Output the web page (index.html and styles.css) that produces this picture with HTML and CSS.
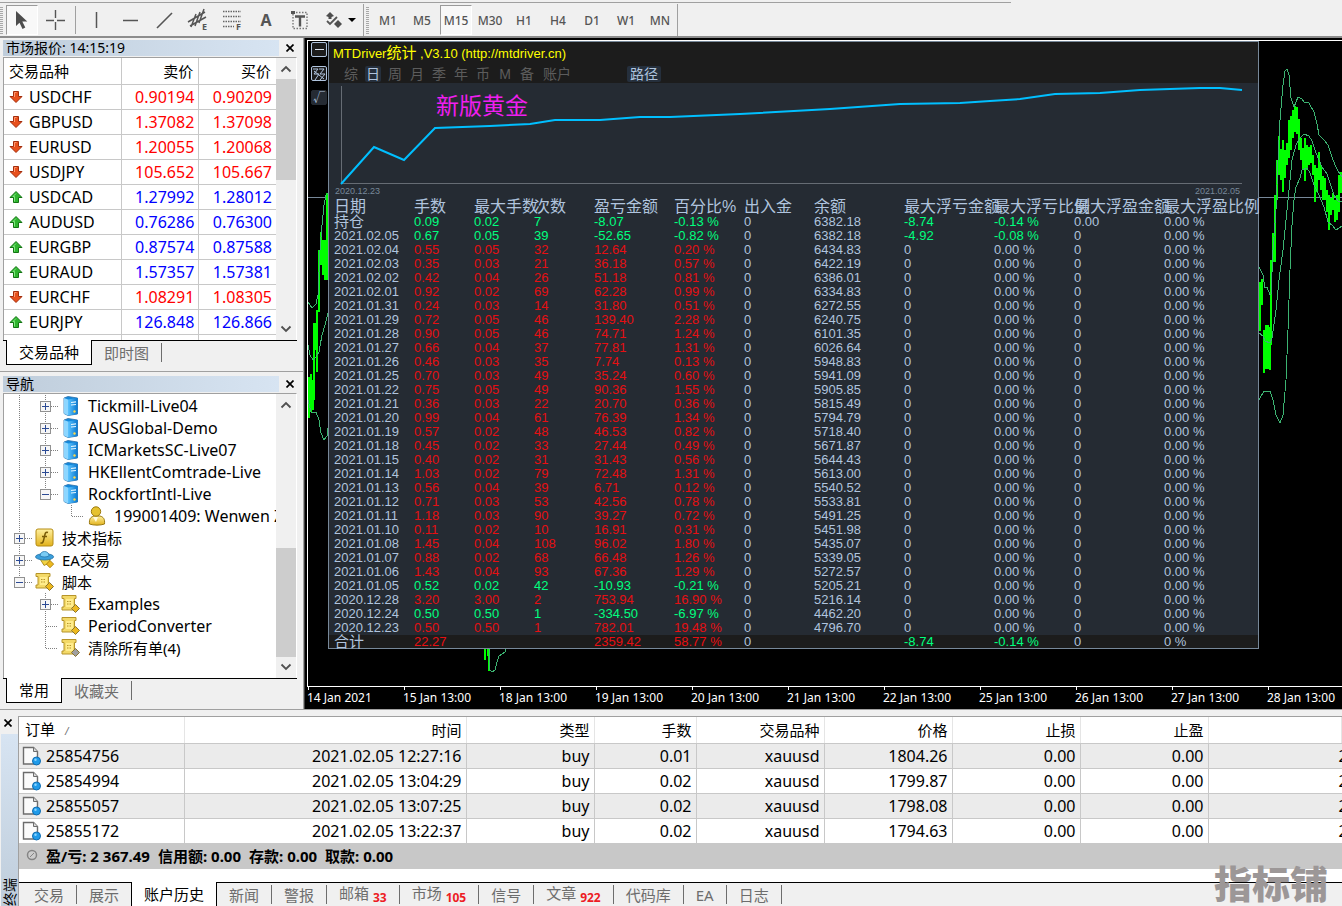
FILE: index.html
```html
<!DOCTYPE html>
<html lang="zh-CN">
<head>
  <meta charset="UTF-8">
  <meta name="viewport" content="width=device-width, initial-scale=1.0">
  <title>MTDriver统计</title>
  <link rel="stylesheet" href="styles.css">
</head>
<body>

  <svg class="defs" width="0" height="0" aria-hidden="true">
    <defs>
      <linearGradient id="blueGrad" x1="0" x2="1"><stop offset="0" stop-color="#5cc4ff"/><stop offset="1" stop-color="#0a78d0"/></linearGradient>
      <linearGradient id="goldGrad" x1="0" x2="0" y1="0" y2="1"><stop offset="0" stop-color="#fff0a0"/><stop offset="1" stop-color="#e2b21c"/></linearGradient>
    </defs>
    <symbol id="down" viewBox="0 0 14 14">
      <path d="M4.500 1.500h5v5h3.500l-6 6-6-6h3.500z" fill="#e8501c" stroke="#a32d0c"/>
      <path d="M5.500 7v-4.500h2" fill="none" stroke="#ff9a70"/>
    </symbol>
    <symbol id="up" viewBox="0 0 14 14">
      <path d="M7 1.500l6 6h-3.500v5h-5v-5h-3.500z" fill="#2fb52f" stroke="#137513"/>
      <path d="M7 3.500l-3 3h1.500v5" fill="none" stroke="#80e880"/>
    </symbol>
    <symbol id="plus" viewBox="0 0 26 22">
      <path d="M13.500 0v22M19 11.500h7" class="dots"/>
      <rect x="8.500" y="6.500" width="10" height="10" fill="#f6f6f6" stroke="#919191"/>
      <path d="M10 11.500h7M13.500 8v7" stroke="#2b4a94"/>
    </symbol>
    <symbol id="minus" viewBox="0 0 26 22">
      <path d="M13.500 0v6M19 11.500h7" class="dots"/>
      <rect x="8.500" y="6.500" width="10" height="10" fill="#f6f6f6" stroke="#919191"/>
      <path d="M10 11.500h7" stroke="#2b4a94"/>
    </symbol>
    <symbol id="line" viewBox="0 0 26 22"><path d="M13.500 0v22" class="dots"/></symbol>
    <symbol id="tee" viewBox="0 0 26 22"><path d="M13.500 0v22M14 11.500h12" class="dots"/></symbol>
    <symbol id="elbow" viewBox="0 0 26 22"><path d="M13.500 0v11.500h14" class="dots"/></symbol>
    <symbol id="server" viewBox="0 0 20 20">
      <path d="M3 2l4-1.500 9.500 1.500v16l-9.500 1.500-4-2z" fill="#1389dc" stroke="#2b6ea8" stroke-width=".8"/>
      <path d="M3 2l4 1.500v16l-4-2z" fill="#8dd6ff"/>
      <path d="M7 3.500l9.500-1.500v16l-9.500 1.500z" fill="url(#blueGrad)"/>
      <path d="M10 6.500l5-.6M10 9l5-.5" stroke="#e8f8ff" stroke-width="1.200"/>
      <circle cx="13.500" cy="15.500" r="1.200" fill="#ffd84a"/>
    </symbol>
    <symbol id="user" viewBox="0 0 20 20">
      <path d="M2.500 18c-.5-5 1-7 4.500-8h6c3.500 1 5 3 4.500 8-4 1.500-11 1.500-15 0z" fill="url(#goldGrad)" stroke="#9b7a10"/>
      <circle cx="9" cy="5.500" r="4.700" fill="#e6c22e" stroke="#9b7a10"/>
      <path d="M6 11l3 5 2-5z" fill="#fffbe0"/>
    </symbol>
    <symbol id="func" viewBox="0 0 20 20">
      <rect x="1" y="1" width="17" height="17" rx="2" fill="url(#goldGrad)" stroke="#b58c14"/>
      <path d="M13 4.500c-2.500-1-3 1-3.500 4l-1 4c-.4 2-1.200 3-3 2.300M7 8.500h5" fill="none" stroke="#7a5b07" stroke-width="1.500"/>
    </symbol>
    <symbol id="expert" viewBox="0 0 22 20">
      <path d="M5 8l5 8 6-3 1-6z" fill="#f2d243" stroke="#a88a18"/>
      <ellipse cx="10.500" cy="6.500" rx="10" ry="3.500" fill="#3a9fdc" stroke="#1d6da3" stroke-width=".8"/>
      <path d="M5.500 5.500c0-6.500 10-6.500 10 0-2.500 1.500-7.500 1.500-10 0z" fill="#79cbf4" stroke="#1d6da3" stroke-width=".8"/>
      <path d="M16.500 10.500l4 4-4 4-4-4z" fill="#edb91f" stroke="#a87e0d"/>
    </symbol>
    <symbol id="script" viewBox="0 0 20 20">
      <path d="M1 1.500h14v3h-1.500v8.500l1.500 3h-14v-3h2v-8.500h-2z" fill="#f3d968" stroke="#b6942a"/>
      <path d="M5 5h7v8h-7z" fill="#ffec8c"/>
      <path d="M6 7.500h5M6 10h5" stroke="#b6942a" stroke-dasharray="1.500 1"/>
      <path d="M14.500 10.500l4 4-4 4-4-4z" fill="var(--tag, #edb91f)" stroke="#8a7430"/>
    </symbol>
    <symbol id="doc" viewBox="0 0 20 20">
      <path d="M1.500 1.500h10l4 4v12.500h-14z" fill="#fbfbfb" stroke="#6d6d6d" stroke-width="1.400"/>
      <path d="M11.500 1.500v4h4" fill="#d8d8d8" stroke="#6d6d6d"/>
      <circle cx="14.500" cy="15" r="4" fill="#1f9bea" stroke="#0f6bb0"/>
      <circle cx="13.500" cy="13.700" r="1.200" fill="#8cd4ff"/>
    </symbol>
    <symbol id="chevUp" viewBox="0 0 12 8"><path d="M1.500 6.500l4.500-4.500 4.500 4.500" fill="none" stroke="#505050" stroke-width="1.800"/></symbol>
    <symbol id="chevDown" viewBox="0 0 12 8"><path d="M1.500 1.500l4.500 4.500 4.500-4.500" fill="none" stroke="#505050" stroke-width="1.800"/></symbol>
    <symbol id="close" viewBox="0 0 8 8"><path d="M.5 .5l7 7M7.500 .5l-7 7" stroke="#000" stroke-width="1.700"/></symbol>
  </svg>

  <header class="toolbars">
    <div class="toolbar">
      <span class="grip"></span>
      <button class="tool pressed" aria-label="光标">
        <svg width="22" height="22"><path d="M5 2v15l3.500-3.200 3 6.200 2.800-1.400-3-6h5z" fill="#4d4d4d"/></svg>
      </button>
      <button class="tool" aria-label="十字准线">
        <svg width="22" height="22"><path d="M10.500 1v8M10.500 13v8M1 11.500h8M12 11.500h8" stroke="#555" stroke-width="1.400"/></svg>
      </button>
      <span class="divider"></span>
      <button class="tool" aria-label="垂直线">
        <svg width="22" height="22"><path d="M11.500 3v16" stroke="#555" stroke-width="1.500"/></svg>
      </button>
      <button class="tool" aria-label="水平线">
        <svg width="22" height="22"><path d="M4 11.500h15" stroke="#555" stroke-width="1.500"/></svg>
      </button>
      <button class="tool" aria-label="趋势线">
        <svg width="22" height="22"><path d="M4 19l15-15" stroke="#555" stroke-width="1.600"/></svg>
      </button>
      <button class="tool" aria-label="等距通道">
        <svg width="24" height="24"><path d="M2 14l17-10M4 18l16-9M5 19l5-13M9 18l5-14M13 15l5-14" stroke="#555" stroke-width="1.500"/><text x="16" y="22" class="tiny">E</text></svg>
      </button>
      <button class="tool" aria-label="斐波纳契">
        <svg width="24" height="24"><path d="M3 3.500h18M3 8.500h18M3 13.500h18M3 18.500h11" stroke="#666" stroke-width="1.500" stroke-dasharray="1.500 1"/><text x="16" y="22" class="tiny">F</text></svg>
      </button>
      <button class="tool letter" aria-label="文字">A</button>
      <button class="tool" aria-label="文字标签">
        <svg width="22" height="22"><rect x="4" y="3.500" width="14" height="16" fill="none" stroke="#777" stroke-width="1.400" stroke-dasharray="1.500 1.500"/><path d="M6 7.500h10M11 7.500v10" stroke="#555" stroke-width="2.400"/><path d="M2 2h4v3h-4z" fill="#555"/></svg>
      </button>
      <button class="tool shapes" aria-label="箭头">
        <svg width="18" height="18"><path d="M5 1l4 4-2.500 1v2h-3v-2l-2.500-1z" fill="#4d4d4d"/><path d="M2 10l3 3 7-7" stroke="#555" stroke-width="1.800" fill="none"/><path d="M13 9l4 4-4 4-4-4z" fill="#4d4d4d"/></svg>
        <svg width="8" height="5"><path d="M0 0h8l-4 4z" fill="#000"/></svg>
      </button>
    </div>
    <div class="toolbar periods">
      <span class="grip"></span>
      <button class="tool">M1</button>
      <button class="tool">M5</button>
      <button class="tool pressed">M15</button>
      <button class="tool">M30</button>
      <button class="tool">H1</button>
      <button class="tool">H4</button>
      <button class="tool">D1</button>
      <button class="tool">W1</button>
      <button class="tool">MN</button>
    </div>
  </header>

  <div class="workspace">
    <aside class="dock">
      <section class="market">
        <div class="dock-head">
          <h2 class="dock-title">市场报价: 14:15:19</h2>
          <button class="close" aria-label="关闭"><svg width="8" height="8"><use href="#close"/></svg></button>
        </div>
        <div class="dock-body">
          <table class="quotes">
            <thead><tr><th>交易品种</th><th>卖价</th><th>买价</th></tr></thead>
            <tbody id="quotes"></tbody>
          </table>
          <div class="scrollbar">
            <svg width="12" height="8"><use href="#chevUp"/></svg>
            <div class="track"><div class="thumb"></div></div>
            <svg width="12" height="8"><use href="#chevDown"/></svg>
          </div>
        </div>
        <nav class="tabs">
          <button class="tab active">交易品种</button>
          <button class="tab">即时图</button>
        </nav>
      </section>

      <section class="navigator">
        <div class="dock-head">
          <h2 class="dock-title">导航</h2>
          <button class="close" aria-label="关闭"><svg width="8" height="8"><use href="#close"/></svg></button>
        </div>
        <div class="dock-body">
          <ul class="tree" id="tree"></ul>
          <div class="scrollbar low">
            <svg width="12" height="8"><use href="#chevUp"/></svg>
            <div class="track"><div class="thumb"></div></div>
            <svg width="12" height="8"><use href="#chevDown"/></svg>
          </div>
        </div>
        <nav class="tabs">
          <button class="tab active">常用</button>
          <button class="tab">收藏夹</button>
        </nav>
      </section>
    </aside>

    <main class="chart">
      <div class="plot">
        <div class="chart-left">
          <svg class="price" viewBox="308 41 20 608" width="20" height="608">
            <path d="M308 197.500h20" class="level"/>
            <path d="M309 377v41M311 374v38M313 380v30M314 323v77M316 323v27M317 310v62M319 250v62M321 232v33M323 240v35M325 240v40M327 193v87" class="candle"/>
            <path d="M308 302l4 6 4-4 2-9 2-45 2-25 2-20 2-10 2-2M308 345l2 10 3 5 3-3 3-5 3-17 3-10 3-12M308 400l3 12h5l3 8 2 13 3 7 3-4 1-8" class="band"/>
          </svg>
          <div class="side-buttons">
            <button class="side-button" aria-label="最小化"><svg width="14" height="14"><path d="M3 6.500h9" stroke="#dfe6f0"/></svg></button>
            <button class="side-button" aria-label="移动"><svg width="14" height="14"><path d="M1 2h5l-4 5h5l-4 6M7 2h5l-4 5h5l-5 6M2 4l10 8" fill="none" stroke="#b0c4de"/></svg></button>
            <button class="side-button plain">√</button>
          </div>
        </div>

        <section class="stats">
          <div class="stats-head">
            <h1 class="stats-title">MTDriver<span>统计</span> ,V3.10 (http://mtdriver.cn)</h1>
            <div class="modes">
              <button class="mode">综</button>
              <button class="mode on">日</button>
              <button class="mode">周</button>
              <button class="mode">月</button>
              <button class="mode">季</button>
              <button class="mode">年</button>
              <button class="mode">币</button>
              <button class="mode">M</button>
              <button class="mode">备</button>
              <button class="mode wide">账户</button>
              <button class="mode path on">路径</button>
            </div>
          </div>
          <div class="equity">
            <svg class="equity-line" viewBox="329 83 929 102" preserveAspectRatio="none" height="102">
              <path d="M341.500 86v98M341 183.500h901" fill="none" stroke="#666c74"/>
              <path d="M341 184l33-37 30 13 31-32 55-2 40-2 25-4 45 0 40-3h30l70-3 90-5 70-5 60-1 30-2 30-2 35-5 45-1 40-3 60-2 20 0 22 2" fill="none" stroke="#00bfff" stroke-width="2"/>
            </svg>
            <span class="equity-name">新版黄金</span>
            <div class="equity-range"><span>2020.12.23</span><span>2021.02.05</span></div>
          </div>
          <table class="days">
            <colgroup>
              <col class="w80"><col class="w60"><col class="w60"><col class="w60"><col class="w80"><col class="w70">
              <col class="w70"><col class="w90"><col class="w90"><col class="w80"><col class="w90"><col>
            </colgroup>
            <thead>
              <tr><th>日期</th><th>手数</th><th>最大手数</th><th>次数</th><th>盈亏金额</th><th>百分比%</th><th>出入金</th><th>余额</th><th>最大浮亏金额</th><th>最大浮亏比例</th><th>最大浮盈金额</th><th>最大浮盈比例</th></tr>
            </thead>
            <tbody id="days"></tbody>
            <tfoot>
              <tr><td class="cjk">合计</td><td class="gain">22.27</td><td></td><td></td><td class="gain">2359.42</td><td class="gain">58.77 %</td><td>0</td><td></td><td class="loss">-8.74</td><td class="loss">-0.14 %</td><td>0</td><td>0 %</td></tr>
            </tfoot>
          </table>
        </section>

        <svg class="price" viewBox="1259 41 83 608" width="83" height="608">
          <path d="M1259 197.500h83" class="level"/>
          <path d="M1260 282v49M1262 279v26M1264 330v43M1266 325v44M1268 325v44M1270 327v43M1271 260v85M1273 233v29M1275 195v67M1277 160v40M1279 136v39M1281 149v31M1283 140v52M1285 150v28M1287 143v22M1289 120v38M1291 116v34M1293 110v28M1295 106v26M1297 107v27M1299 119v31M1301 138v22M1303 148v22M1305 138v43M1307 145v25M1309 147v18M1311 145v18M1313 155v20M1315 165v37M1317 168v24M1319 152v28M1321 165v25M1323 176v24M1325 178v22M1327 190v22M1329 195v35M1331 198v17M1333 193v17M1335 200v22M1337 195v25M1339 175v37M1341 172v21" class="candle"/>
          <path d="M1259 267L1263 275 1265 288 1267 287 1270 295 1271 294 1273 250 1276 210 1278 160 1280 120 1283 85 1285 71 1287 69 1289 75 1291 98 1294 107 1296 102 1298 97 1302 99 1304 102 1309 103 1314 112 1317 124 1319 135 1324 140 1328 145 1332 157 1335 165 1338 171 1342 177" class="band"/>
          <path d="M1259 333L1263 336 1265 341 1270 343 1272 338 1276 310 1279 280 1283 250 1287 210 1290 180 1292 160 1296 145 1300 138 1304 134 1309 136 1312 141 1316 153 1322 167 1327 174 1330 183 1334 195 1338 201 1342 202" class="band"/>
          <path d="M1259 400L1264 391 1270 391 1273 400 1276 415 1280 423 1283 415 1286 380 1288 330 1290 270 1292 225 1294 200 1296 187 1300 178 1302 170 1307 168 1310 173 1314 185 1319 195 1324 207 1328 222 1332 225 1336 230 1342 226" class="band"/>
        </svg>
      </div>
      <div class="plot-rest">
        <svg class="tail" width="24" height="24">
          <path d="M2 0v11M5 0v7M6 0v22" class="candle"/>
          <path d="M6 0v20l3 3 3-2 2-8 2-6 3-2 3-2v-3" class="band"/>
        </svg>
      </div>
      <div class="time-axis">
        <span>14 Jan 2021</span><span>15 Jan 13:00</span><span>18 Jan 13:00</span><span>19 Jan 13:00</span><span>20 Jan 13:00</span><span>21 Jan 13:00</span><span>22 Jan 13:00</span><span>25 Jan 13:00</span><span>26 Jan 13:00</span><span>27 Jan 13:00</span><span>28 Jan 13:00</span>
      </div>
    </main>
  </div>

  <section class="terminal">
    <div class="terminal-side">
      <button class="close" aria-label="关闭"><svg width="8" height="8"><use href="#close"/></svg></button>
      <div class="terminal-name"><span>终端</span></div>
    </div>
    <div class="terminal-body">
      <table class="orders">
        <colgroup><col class="c-order"><col class="c-time"><col class="c-std"><col class="c-lots"><col class="c-std"><col class="c-std"><col class="c-std"><col class="c-std"><col></colgroup>
        <thead>
          <tr><th class="first">订单 <i>/</i></th><th>时间</th><th>类型</th><th>手数</th><th>交易品种</th><th>价格</th><th>止损</th><th>止盈</th><th></th></tr>
        </thead>
        <tbody id="orders"></tbody>
      </table>
      <div class="summary">
        <svg width="12" height="12"><circle cx="6" cy="6" r="4.500" fill="#ccc" stroke="#858585" stroke-width="1.500"/><path d="M4 8l4-4" stroke="#858585"/></svg>
        <span>盈/亏: 2 367.49</span><span>信用额: 0.00</span><span>存款: 0.00</span><span>取款: 0.00</span>
      </div>
      <nav class="tabs wide-tabs">
        <button class="tab">交易</button>
        <button class="tab">展示</button>
        <button class="tab active">账户历史</button>
        <button class="tab">新闻</button>
        <button class="tab">警报</button>
        <button class="tab">邮箱 <b>33</b></button>
        <button class="tab">市场 <b>105</b></button>
        <button class="tab">信号</button>
        <button class="tab">文章 <b>922</b></button>
        <button class="tab">代码库</button>
        <button class="tab">EA</button>
        <button class="tab">日志</button>
      </nav>
    </div>
    <div class="watermark">指标铺</div>
  </section>

  <script src="script.js"></script>
</body>
</html>
```

FILE: styles.css
```css
* {
  box-sizing: border-box;
}

body {
  margin: 0;
  height: 100vh;
  display: flex;
  flex-direction: column;
  overflow: hidden;
  background: #f0f0f0;
  color: #000;
  font-family: "Noto Sans", "Noto Sans CJK SC", sans-serif;
  font-size: 15px;
}

button {
  padding: 0;
  border: none;
  background: none;
  color: inherit;
  font: inherit;
  white-space: nowrap;
}

h1, h2 {
  margin: 0;
  font-weight: 400;
}

table {
  border-collapse: collapse;
  table-layout: fixed;
}

th {
  font-weight: 400;
  white-space: nowrap;
}

td {
  white-space: nowrap;
}

svg {
  display: block;
  flex: none;
}

.defs {
  position: absolute;
}

.dots {
  fill: none;
  stroke: #808080;
  stroke-dasharray: 1 1;
}

/* toolbars */

.toolbars {
  flex: none;
  display: flex;
  height: 38px;
  padding-top: 4px;
  border-bottom: 2px solid #8c8c8c;
  background: linear-gradient(#a0a0a0, #a0a0a0) 0 2px / 1011px 1px no-repeat, #f0f0f0;
}

.toolbar {
  display: flex;
  align-items: center;
  border-right: 1px solid #a0a0a0;
}

.grip {
  width: 3px;
  height: 27px;
  margin-right: 2px;
  background: repeating-linear-gradient(#a8a8a8 0 1px, #f0f0f0 1px 2px);
}

.tool {
  display: flex;
  align-items: center;
  justify-content: center;
  width: 34px;
  height: 30px;
  color: #555;
  font-size: 12px;
  font-weight: 500;
}

.tool svg {
  overflow: visible;
}

.tool.pressed {
  width: 32px;
  margin: 0 1px;
  border: 1px solid #fff;
  border-top-color: #9a9a9a;
  border-left-color: #9a9a9a;
  background: #f8f8f8;
}

.letter {
  font-size: 16px;
  font-weight: 700;
}

.shapes {
  width: 46px;
  gap: 5px;
}

.tiny {
  fill: #555;
  font-size: 9px;
  font-weight: 700;
}

.divider {
  width: 1px;
  height: 28px;
  margin: 0 3px 0 2px;
  background: #a0a0a0;
}

.periods {
  padding-left: 2px;
}

/* docked panels */

.workspace {
  flex: 1;
  display: flex;
  min-height: 0;
}

.dock {
  flex: none;
  width: 304px;
  display: flex;
  flex-direction: column;
  border-right: 1px solid #a0a0a0;
}

.market,
.navigator {
  display: flex;
  flex-direction: column;
  padding: 2px 6px 4px 3px;
}

.market {
  height: 334px;
  border-bottom: 1px solid #a0a0a0;
}

.navigator {
  flex: 1;
  min-height: 0;
  padding-top: 4px;
}

.dock-head {
  flex: none;
  display: flex;
  justify-content: space-between;
  height: 16px;
  margin-bottom: 1px;
}

.dock-title {
  flex: 1;
  padding-left: 3px;
  background: linear-gradient(90deg, #bfcddb, #d7e4f2);
  font-size: 14px;
  line-height: 16px;
}

.close {
  display: flex;
  align-items: center;
  justify-content: center;
  width: 18px;
  height: 16px;
}

.dock-head .close {
  padding-left: 4px;
}

.dock-body {
  flex: 1;
  display: flex;
  min-height: 0;
  overflow: hidden;
  border: 1px solid #a0a0a0;
  border-right-color: #fff;
  border-bottom: none;
  background: #fff;
}

.quotes {
  flex: 1;
  align-self: flex-start;
  font-size: 16px;
}

.quotes th,
.quotes td {
  height: 25px;
  padding: 0 4px;
  border-right: 1px solid #c8c8c8;
  border-bottom: 1px solid #c8c8c8;
  line-height: 22px;
  text-align: right;
}

.quotes th {
  height: 26px;
  padding-right: 5px;
  font-size: 15px;
}

.quotes th:first-child,
.quotes td:first-child {
  width: 117px;
  padding-left: 5px;
  text-align: left;
}

.quotes td:last-child,
.quotes th:last-child {
  border-right: none;
}

.quotes .symbol {
  display: flex;
  align-items: center;
  gap: 6px;
}

.fall {
  color: #f00;
}

.rise {
  color: #00f;
}

.scrollbar {
  flex: none;
  width: 20px;
  display: flex;
  flex-direction: column;
  align-items: center;
  gap: 6px;
  padding: 7px 0;
  background: #f0f0f0;
}

.track {
  flex: 1;
  display: flex;
  flex-direction: column;
  align-self: stretch;
}

.thumb {
  height: 42%;
  background: #cdcdcd;
}

.low .track {
  justify-content: flex-end;
}

.low .thumb {
  height: 45%;
}

.tabs {
  flex: none;
  display: flex;
  align-items: flex-start;
  height: 27px;
  padding-left: 3px;
  border-top: 1px solid #000;
}

.tab {
  height: 19px;
  margin-top: 2px;
  padding: 0 12px;
  border-right: 1px solid #6d6d6d;
  color: #6d6d6d;
  line-height: 16px;
}

.tab.active {
  height: 25px;
  margin-top: -1px;
  border: 1px solid #000;
  border-top: none;
  background: #fff;
  color: #000;
}

.tree {
  flex: 1;
  min-width: 0;
  margin: 0;
  padding: 1px 0 0 2px;
  overflow: hidden;
  list-style: none;
  font-size: 16px;
}

.tree li {
  display: flex;
  align-items: center;
  height: 22px;
  line-height: 22px;
  white-space: nowrap;
}

.tree .icon {
  margin: 0 7px 0 3px;
}

.tree .cjk {
  font-size: 15px;
}

.tree .manual {
  --tag: #a0a0a0;
}

/* chart window */

.chart {
  flex: 1;
  display: flex;
  flex-direction: column;
  min-width: 0;
  padding: 2px 0 3px 2px;
  border-left: 1px solid #404040;
  background: #000;
}

.plot {
  display: flex;
  border-top: 1px solid #fff;
  border-left: 1px solid #fff;
}

.plot-rest {
  flex: 1;
  border-left: 1px solid #fff;
}

.chart-left {
  position: relative;
  flex: none;
  width: 20px;
}

.side-buttons {
  position: absolute;
  top: 1px;
  left: 3px;
  display: flex;
  flex-direction: column;
  gap: 9px;
}

.side-button {
  display: flex;
  width: 16px;
  height: 15px;
  border: 1px solid #b0c4de;
  border-radius: 2px;
  background: #1c1c1c;
}

.side-button.plain {
  border-color: #252b33;
  background: #252b33;
  color: #b0c4de;
  font-size: 12px;
  line-height: 13px;
  justify-content: center;
}

.price,
.tail {
  overflow: visible;
  shape-rendering: crispEdges;
}

.level {
  stroke: #778899;
}

.candle {
  fill: none;
  stroke: #0f0;
  stroke-width: 2;
}

.band {
  fill: none;
  stroke: #3cb371;
}

.stats {
  flex: 1;
  min-width: 0;
  border: 1px solid #778899;
  background: #252b33;
  color: #b0c4de;
  font-family: "Liberation Sans", "Noto Sans CJK SC", sans-serif;
  z-index: 1;
}

.stats-head {
  height: 41px;
  padding: 2px 4px 0;
  background: #1c1c1c;
}

.stats-title {
  color: #ff0;
  font-size: 13px;
  line-height: 18px;
}

.stats-title span {
  font-size: 15px;
}

.modes {
  display: flex;
  gap: 6px;
  padding: 3px 0 0 10px;
}

.mode {
  width: 16px;
  height: 16px;
  border-radius: 2px;
  color: #5c5c5c;
  font-size: 14px;
  line-height: 16px;
}

.mode.on {
  background: #252f3c;
  color: #b0c4de;
}

.mode.wide {
  width: 32px;
}

.mode.path {
  width: 34px;
  margin-left: 48px;
}

.equity {
  position: relative;
  height: 116px;
}

.equity-line {
  width: 100%;
}

.equity-name {
  position: absolute;
  top: 8px;
  left: 107px;
  color: #f01ef0;
  font-size: 23px;
  line-height: 30px;
}

.equity-range {
  display: flex;
  justify-content: space-between;
  padding: 0 18px 0 6px;
  color: #778899;
  font-size: 9px;
  line-height: 12px;
}

.days {
  width: 100%;
  font-size: 13px;
  line-height: 14px;
}

.days th,
.days td {
  height: 14px;
  padding: 0;
  text-align: left;
}

.days th:first-child,
.days td:first-child {
  padding-left: 5px;
}

.days th {
  height: 16px;
  font-size: 16px;
  line-height: 16px;
}

.days .cjk {
  font-size: 15px;
}

.days tfoot {
  background: #1c1c1c;
}

.days tfoot td {
  height: 13px;
  line-height: 13px;
}

.w60 { width: 60px; }
.w70 { width: 70px; }
.w80 { width: 80px; }
.w90 { width: 90px; }

.days col:first-child {
  width: 85px;
}

.gain {
  color: #e60f12;
}

.loss {
  color: #00ff7f;
}

.tail {
  margin-left: 175px;
}

.time-axis {
  display: flex;
  overflow: hidden;
  border-top: 1px solid #fff;
  color: #fff;
  font-size: 12px;
  line-height: 16px;
}

.time-axis span {
  flex: 0 0 96px;
  padding-top: 3px;
  background: linear-gradient(#fff, #fff) 1px 0 / 1px 3px no-repeat;
  white-space: nowrap;
}

/* terminal */

.terminal {
  position: relative;
  flex: none;
  display: flex;
  height: 197px;
  padding-top: 6px;
  border-top: 1px solid #a0a0a0;
}

.terminal-side {
  flex: none;
  width: 18px;
  display: flex;
  flex-direction: column;
  padding-left: 1px;
}

.terminal-side .close {
  width: 14px;
  height: 14px;
}

.terminal-name {
  flex: 1;
  display: flex;
  align-items: flex-end;
  margin-top: 4px;
  background: linear-gradient(#d7e4f2, #bfcddb);
}

.terminal-name span {
  height: 28px;
  font-size: 14px;
  line-height: 17px;
  writing-mode: vertical-rl;
  text-orientation: sideways;
  transform: rotate(180deg);
}

.terminal-body {
  flex: 1;
  display: flex;
  flex-direction: column;
  min-width: 0;
  overflow: hidden;
  border-top: 1px solid #a0a0a0;
  border-left: 1px solid #a0a0a0;
  background: #fff;
}

.orders {
  width: 100%;
  font-size: 16px;
}

.c-order { width: 165px; }
.c-time { width: 282px; }
.c-std { width: 128px; }
.c-lots { width: 102px; }

.orders th,
.orders td {
  height: 25px;
  padding: 0 4px;
  overflow: hidden;
  border-right: 1px solid #c8c8c8;
  border-bottom: 1px solid #c8c8c8;
  line-height: 22px;
  text-align: right;
}

.orders th {
  height: 26px;
  border-right-color: #e5e5e5;
  font-size: 15px;
}

.orders .first {
  padding-left: 6px;
  text-align: left;
}

.first i {
  margin-left: 6px;
  color: #6d6d6d;
  font-size: 10px;
}

.orders td:last-child {
  padding: 0 0 0 130px;
  border-right: none;
  text-align: left;
}

.orders tbody tr:nth-child(odd) {
  background: #ebebeb;
}

.orders .number {
  display: flex;
  align-items: center;
  gap: 4px;
}

.orders .number svg {
  margin-left: -1px;
}

.summary {
  flex: none;
  display: flex;
  align-items: center;
  gap: 8px;
  height: 25px;
  padding: 0 0 2px 7px;
  background: #c8c8c8;
  font-weight: 700;
}

.wide-tabs {
  height: 24px;
  margin-top: auto;
  background: #f0f0f0;
}

.wide-tabs .tab:nth-child(2) {
  border-right: none;
}

.tab b {
  color: #ed1c24;
  font-size: 12px;
  vertical-align: -3px;
}

.watermark {
  position: absolute;
  right: 14px;
  bottom: 4px;
  color: #9c9797;
  font-family: "Noto Sans CJK SC", sans-serif;
  font-size: 38px;
  font-weight: 900;
  line-height: 40px;
}
```

FILE: script.js
```javascript
const quotes = [
  ['USDCHF', '0.90194', '0.90209', 'down'],
  ['GBPUSD', '1.37082', '1.37098', 'down'],
  ['EURUSD', '1.20055', '1.20068', 'down'],
  ['USDJPY', '105.652', '105.667', 'down'],
  ['USDCAD', '1.27992', '1.28012', 'up'],
  ['AUDUSD', '0.76286', '0.76300', 'up'],
  ['EURGBP', '0.87574', '0.87588', 'up'],
  ['EURAUD', '1.57357', '1.57381', 'up'],
  ['EURCHF', '1.08291', '1.08305', 'down'],
  ['EURJPY', '126.848', '126.866', 'up']
];

// guides, icon, label
const tree = [
  ['line plus', 'server', 'Tickmill-Live04'],
  ['line plus', 'server', 'AUSGlobal-Demo'],
  ['line plus', 'server', 'ICMarketsSC-Live07'],
  ['line plus', 'server', 'HKEllentComtrade-Live'],
  ['line minus', 'server', 'RockfortIntl-Live'],
  ['line none elbow', 'user', '199001409: Wenwen Z'],
  ['plus', 'func', '技术指标'],
  ['plus', 'expert', 'EA交易'],
  ['minus', 'script', '脚本'],
  ['none plus', 'script', 'Examples'],
  ['none tee', 'script', 'PeriodConverter'],
  ['none elbow', 'script', '清除所有单(4)']
];

// date, lots, max lots, count, profit, percent, balance
const days = [
  ['2021.02.04', '0.55', '0.05', '32', '12.64', '0.20', '6434.83'],
  ['2021.02.03', '0.35', '0.03', '21', '36.18', '0.57', '6422.19'],
  ['2021.02.02', '0.42', '0.04', '26', '51.18', '0.81', '6386.01'],
  ['2021.02.01', '0.92', '0.02', '69', '62.28', '0.99', '6334.83'],
  ['2021.01.31', '0.24', '0.03', '14', '31.80', '0.51', '6272.55'],
  ['2021.01.29', '0.72', '0.05', '46', '139.40', '2.28', '6240.75'],
  ['2021.01.28', '0.90', '0.05', '46', '74.71', '1.24', '6101.35'],
  ['2021.01.27', '0.66', '0.04', '37', '77.81', '1.31', '6026.64'],
  ['2021.01.26', '0.46', '0.03', '35', '7.74', '0.13', '5948.83'],
  ['2021.01.25', '0.70', '0.03', '49', '35.24', '0.60', '5941.09'],
  ['2021.01.22', '0.75', '0.05', '49', '90.36', '1.55', '5905.85'],
  ['2021.01.21', '0.36', '0.03', '22', '20.70', '0.36', '5815.49'],
  ['2021.01.20', '0.99', '0.04', '61', '76.39', '1.34', '5794.79'],
  ['2021.01.19', '0.57', '0.02', '48', '46.53', '0.82', '5718.40'],
  ['2021.01.18', '0.45', '0.02', '33', '27.44', '0.49', '5671.87'],
  ['2021.01.15', '0.40', '0.02', '31', '31.43', '0.56', '5644.43'],
  ['2021.01.14', '1.03', '0.02', '79', '72.48', '1.31', '5613.00'],
  ['2021.01.13', '0.56', '0.04', '39', '6.71', '0.12', '5540.52'],
  ['2021.01.12', '0.71', '0.03', '53', '42.56', '0.78', '5533.81'],
  ['2021.01.11', '1.18', '0.03', '90', '39.27', '0.72', '5491.25'],
  ['2021.01.10', '0.11', '0.02', '10', '16.91', '0.31', '5451.98'],
  ['2021.01.08', '1.45', '0.04', '108', '96.02', '1.80', '5435.07'],
  ['2021.01.07', '0.88', '0.02', '68', '66.48', '1.26', '5339.05'],
  ['2021.01.06', '1.43', '0.04', '93', '67.36', '1.29', '5272.57'],
  ['2021.01.05', '0.52', '0.02', '42', '-10.93', '-0.21', '5205.21'],
  ['2020.12.28', '3.20', '3.00', '2', '753.94', '16.90', '5216.14'],
  ['2020.12.24', '0.50', '0.50', '1', '-334.50', '-6.97', '4462.20'],
  ['2020.12.23', '0.50', '0.50', '1', '782.01', '19.48', '4796.70']
].map(row => [...row, '0', '0.00 %', '0', '0.00 %']);

days.unshift(
  ['持仓', '0.09', '0.02', '7', '-8.07', '-0.13', '6382.18', '-8.74', '-0.14 %', '0.00', '0.00 %'],
  ['2021.02.05', '0.67', '0.05', '39', '-52.65', '-0.82', '6382.18', '-4.92', '-0.08 %', '0', '0.00 %']
);

const orders = [
  ['25854756', '2021.02.05 12:27:16', '0.01', '1804.26'],
  ['25854994', '2021.02.05 13:04:29', '0.02', '1799.87'],
  ['25855057', '2021.02.05 13:07:25', '0.02', '1798.08'],
  ['25855172', '2021.02.05 13:22:37', '0.02', '1794.63']
];

function icon(id, width, height, cls = '') {
  return `<svg class="${cls}" width="${width}" height="${height}"><use href="#${id}"/></svg>`;
}

document.getElementById('quotes').innerHTML = quotes.map(([symbol, bid, ask, dir]) => {
  const color = dir === 'down' ? 'fall' : 'rise';
  return `<tr><td><span class="symbol">${icon(dir, 14, 14)}${symbol}</span></td>
    <td class="${color}">${bid}</td><td class="${color}">${ask}</td></tr>`;
}).join('') + '<tr><td></td><td></td><td></td></tr>';

document.getElementById('tree').innerHTML = tree.map(([guides, name, label], i) => {
  const cls = /[^\x00-\x7f]/.test(label) ? 'cjk' : '';
  const last = i === tree.length - 1 ? ' manual' : '';
  return `<li>${guides.split(' ').map(g => icon(g, 26, 22)).join('')}
    ${icon(name, 20, 20, 'icon' + last)}<span class="${cls}">${label}</span></li>`;
}).join('');

document.getElementById('days').innerHTML = days.map(row => {
  const [date, lots, maxLots, count, profit, percent, balance, ...floating] = row;
  const color = profit.startsWith('-') ? 'loss' : 'gain';
  const result = [lots, maxLots, count, profit, percent + ' %'];
  return `<tr><td class="${date === '持仓' ? 'cjk' : ''}">${date}</td>
    ${result.map(v => `<td class="${color}">${v}</td>`).join('')}
    <td>0</td><td>${balance}</td>
    ${floating.map(v => `<td class="${v.startsWith('-') ? 'loss' : ''}">${v}</td>`).join('')}</tr>`;
}).join('');

document.getElementById('orders').innerHTML = orders.map(([id, time, lots, price]) =>
  `<tr><td><span class="number">${icon('doc', 20, 20)}${id}</span></td><td>${time}</td><td>buy</td>
    <td>${lots}</td><td>xauusd</td><td>${price}</td><td>0.00</td><td>0.00</td><td>2</td></tr>`
).join('');
```
